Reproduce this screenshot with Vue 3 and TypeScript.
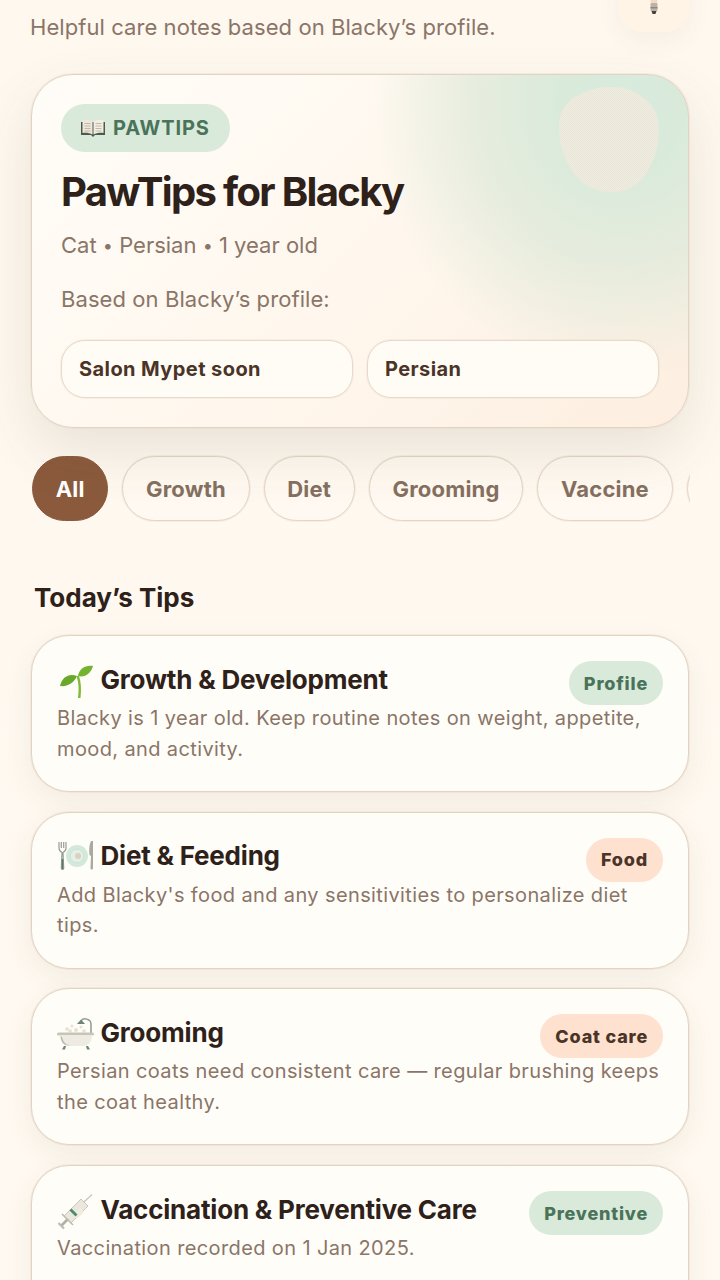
<script setup lang="ts">
interface Tip { icon: string; title: string; text: string; tag: string; tone: string }
const chips: string[] = ['All', 'Growth', 'Diet', 'Grooming', 'Vaccine', 'Health']
const tips: Tip[] = [
  { icon: 'sprout', title: 'Growth & Development', text: 'Blacky is 1 year old. Keep routine notes on weight, appetite, mood, and activity.', tag: 'Profile', tone: 'green' },
  { icon: 'plate', title: 'Diet & Feeding', text: "Add Blacky's food and any sensitivities to personalize diet tips.", tag: 'Food', tone: 'peach' },
  { icon: 'bath', title: 'Grooming', text: 'Persian coats need consistent care — regular brushing keeps the coat healthy.', tag: 'Coat care', tone: 'peach' },
  { icon: 'syringe', title: 'Vaccination & Preventive Care', text: 'Vaccination recorded on 1 Jan 2025.', tag: 'Preventive', tone: 'green' },
]
</script>

<template>
  <div class="page">
    <header class="head">
      <p class="sub">Helpful care notes based on Blacky’s profile.</p>
      <div class="bulb">
        <svg width="14" height="34" viewBox="0 0 14 34">
          <path d="M1 2 C1 10 3 14 4 20 H10 C11 14 13 10 13 2 Z" fill="#f6d9c4" />
          <rect x="3.5" y="20" width="7" height="8" rx="1" fill="#b9b3aa" />
          <rect x="3.5" y="24" width="7" height="1.4" fill="#8d877f" />
          <path d="M4.5 28 H9.5 L8.5 31 H5.5 Z" fill="#4a423a" />
        </svg>
      </div>
    </header>

    <section class="hero">
      <div class="blob"></div>
      <div class="badge">
        <svg class="book" width="24" height="18" viewBox="0 0 24 18">
          <path d="M0 3 V16 H10 L12 18 L14 16 H24 V3 Z" fill="#4d5a50" />
          <path d="M1.5 1.5 C5 .5 9 1 11.5 3 V15.5 C9 14 5 13.5 1.5 14 Z" fill="#efe8da" />
          <path d="M22.5 1.5 C19 .5 15 1 12.5 3 V15.5 C15 14 19 13.5 22.5 14 Z" fill="#f4eee2" />
          <path d="M3.5 4.5 H9.5 M3.5 7 H9.5 M3.5 9.5 H9.5 M3.5 12 H9.5 M14.5 4.5 H20.5 M14.5 7 H20.5 M14.5 9.5 H20.5 M14.5 12 H20.5" stroke="#b8b3a4" stroke-width=".9" />
        </svg>
        <span>PAWTIPS</span>
      </div>
      <h1>PawTips for Blacky</h1>
      <p class="meta">Cat <span class="dot">•</span> Persian <span class="dot">•</span> 1 year old</p>
      <p class="based">Based on Blacky’s profile:</p>
      <div class="facts">
        <div class="fact">Salon Mypet soon</div>
        <div class="fact">Persian</div>
      </div>
    </section>

    <nav class="chips">
      <button v-for="(c, i) in chips" :key="c" class="chip" :class="{ on: i === 0 }">{{ c }}</button>
    </nav>

    <h2>Today’s Tips</h2>

    <article v-for="t in tips" :key="t.title" class="tip">
      <div class="tip-top">
        <h3>
          <svg class="ico" width="36" height="36" viewBox="0 0 36 36">
            <g v-if="t.icon === 'sprout'">
              <path d="M2 23 C4 14 11 10 19 13 C16 20 9 24 2 23 Z" fill="#6aa82b" />
              <path d="M20 13 C21 6 27 2 35 3 C33 10 27 15 20 13 Z" fill="#74b32f" />
              <path d="M18.5 13 C21 20 21 27 20 35 L22.5 35 C23.5 26 23 19 21 13 Z" fill="#7dba35" />
            </g>
            <g v-else-if="t.icon === 'plate'">
              <circle cx="19" cy="17" r="11" fill="#d3e9dc" />
              <circle cx="19" cy="17" r="6.8" fill="#e4f0e6" stroke="#c6dfd0" stroke-width=".8" />
              <circle cx="20" cy="17" r="3" fill="#d9c8b8" opacity=".8" />
              <path d="M1 3 V9 C1 12 3 13 4 13.5 L3.3 29 C3.3 31 5.7 31 5.7 29 L5 13.5 C6 13 8 12 8 9 V3 M3.3 3 V9 M5.7 3 V9" fill="none" stroke="#9a9c94" stroke-width="1.2" />
              <path d="M3.8 20 H5.2 V30 H3.8 Z" fill="#4f7a66" />
              <path d="M33 2 C31 6 31 12 31.5 16 L33 17 L32.5 29 C32.5 31 35 31 35 29 V2 Z" fill="#aaa99f" />
            </g>
            <g v-else-if="t.icon === 'bath'">
              <path d="M33 18 V8 C33 3 25 1 23 5" fill="none" stroke="#8f9a90" stroke-width="1.5" />
              <path d="M19 8 L23 3.5 L27 8 Z" fill="#6d8577" />
              <g fill="#e6e1d6">
                <circle cx="9" cy="13" r="1.8" /><circle cx="14" cy="10" r="1.6" /><circle cx="18" cy="14" r="2" /><circle cx="23" cy="11" r="1.5" /><circle cx="26" cy="15" r="1.8" /><circle cx="12" cy="15" r="1.8" />
              </g>
              <rect x="-1" y="16.5" width="37" height="3" rx="1.5" fill="#c7c5b8" />
              <path d="M2 19 H34 C34 26 30 30 25 30 H11 C6 30 2 26 2 19 Z" fill="#eeece2" />
              <path d="M4 21 C5 26 8 29 13 29.5 H11 C6 30 3 26 2.5 20 Z" fill="#bcbdb0" />
              <path d="M6 30 L8 30 L7 33.5 H4 Z M28 30 L30 30 L32 33.5 H29 Z" fill="#6d8577" />
            </g>
            <g v-else>
              <path d="M26 9 L34 1.5" stroke="#c4c4bb" stroke-width="1.1" />
              <path d="M6 23 L23 6 L30 13 L13 30 Z" fill="#ebe7dc" stroke="#bdbcb0" stroke-width=".8" />
              <path d="M15 22 L22 15 L26 19 L19 26 Z" fill="#f1ecdf" />
              <path d="M13.5 15.5 L19.5 21.5 L17.5 23.5 L11.5 17.5 Z" fill="#4d8a72" />
              <path d="M10 26 L3.5 32.5" stroke="#b0b0a4" stroke-width="2.6" />
              <path d="M0.5 30 L6 35.5" stroke="#bdbcb0" stroke-width="2.2" />
              <path d="M4 21 L15 32" stroke="#bdbcb0" stroke-width="1.6" />
            </g>
          </svg>
          {{ t.title }}
        </h3>
        <span class="tag" :class="t.tone">{{ t.tag }}</span>
      </div>
      <p>{{ t.text }}</p>
    </article>
  </div>
</template>

<style>
html, body { margin: 0; background: #fff8ef; }
</style>

<style scoped>
.page {
  width: 720px;
  height: 1280px;
  overflow: hidden;
  box-sizing: border-box;
  padding: 0 31px;
  background: linear-gradient(180deg, #fff8ef 0%, #fff9f1 100%);
  font-family: Inter, "Noto Sans", sans-serif;
  color: #2e211a;
}
.head {
  display: flex;
  justify-content: space-between;
  align-items: flex-start;
  height: 74px;
  margin-right: -1px;
}
.sub {
  margin: 13px 0 0 -1px;
  font-size: 22px;
  line-height: 28px;
  letter-spacing: 0.07px;
  color: #8a7568;
}
.bulb {
  width: 72px;
  height: 72px;
  margin: -40px 0 0;
  border-radius: 24px;
  background: #fff4e6;
  box-shadow: 0 10px 24px rgba(80, 70, 40, 0.05);
  display: flex;
  justify-content: center;
  padding-top: 23px;
  box-sizing: border-box;
}
.hero {
  position: relative;
  height: 354px;
  box-sizing: border-box;
  padding: 29px 29px 0;
  border: 1px solid #e2d3c3;
  border-radius: 42px;
  background:
    radial-gradient(ellipse 250px 275px at 90% 8%, #d8ebdc 0%, #d9eadb 25%, rgba(224, 234, 218, 0.75) 62%, rgba(255, 246, 236, 0) 100%),
    linear-gradient(135deg, #fffdf8 0%, #fff6ec 60%, #fdeee0 100%);
  box-shadow: 0 0 0 1px rgba(230, 216, 201, 0.35), 0 24px 56px rgba(80, 70, 40, 0.12);
}
.blob {
  position: absolute;
  left: 527px;
  top: 12px;
  width: 100px;
  height: 105px;
  border-radius: 50% 46% 44% 50% / 36% 40% 60% 62%;
  background: repeating-conic-gradient(#f3eadf 0 25%, #e6e8da 0 50%) 0 0 / 2px 2px;
}
.badge {
  position: relative;
  display: inline-flex;
  align-items: center;
  gap: 8px;
  height: 48px;
  padding: 0 20px;
  border-radius: 24px;
  background: #d9eadb;
  color: #4a7359;
  font-size: 20px;
  font-weight: 700;
  letter-spacing: 0.9px;
}
.book { flex: none; }
h1 {
  position: relative;
  margin: 14px 0 0;
  font-size: 40px;
  line-height: 52px;
  font-weight: 700;
  letter-spacing: -1.65px;
  color: #2e211a;
}
.meta {
  margin: 13px 0 0;
  font-size: 22px;
  line-height: 28px;
  color: #8a7568;
}
.dot { font-size: 18px; vertical-align: 1px; }
.based {
  margin: 25px 0 0;
  font-size: 22px;
  line-height: 28px;
  letter-spacing: 0.08px;
  color: #8a7568;
}
.facts {
  display: grid;
  grid-template-columns: 1fr 1fr;
  gap: 14px;
  margin-top: 27px;
}
.fact {
  position: relative;
  height: 58px;
  box-sizing: border-box;
  padding: 0 17px;
  display: flex;
  align-items: center;
  border: 1px solid #e8dacb;
  border-radius: 24px;
  background: #fffcf6;
  box-shadow: 0 0 0 1px rgba(232, 218, 203, 0.3);
  font-size: 20px;
  font-weight: 700;
  letter-spacing: 0.42px;
  color: #4a3428;
}
.chips {
  display: flex;
  gap: 14px;
  padding: 2px;
  margin: 26px 0 0 -1px;
  width: 656px;
  overflow: hidden;
  flex-wrap: nowrap;
}
.chip {
  flex: none;
  height: 65px;
  padding: 0 22.7px;
  border: 1px solid #e4d6c7;
  border-radius: 33px;
  background: #fff9f1;
  box-shadow: 0 0 0 1px rgba(232, 218, 203, 0.35);
  color: #85705f;
  font-family: inherit;
  font-size: 22px;
  font-weight: 700;
  letter-spacing: 0.2px;
}
.chip.on {
  background: #8b5a3c;
  border-color: #8b5a3c;
  box-shadow: none;
  color: #fff;
}
h2 {
  margin: 57px 0 19px 3px;
  font-size: 26px;
  line-height: 36px;
  font-weight: 700;
  color: #2e211a;
}
.tip {
  box-sizing: border-box;
  width: 658px;
  height: 157px;
  margin-bottom: 19.7px;
  padding: 25px 25px 0;
  border: 1px solid #e2d3c3;
  border-radius: 38px;
  background: #fffdf8;
  box-shadow: 0 0 0 1px rgba(230, 216, 201, 0.35), 0 10px 30px rgba(80, 70, 40, 0.07);
}
.tip-top {
  display: flex;
  justify-content: space-between;
  align-items: flex-start;
  height: 44px;
}
h3 {
  margin: 0;
  display: flex;
  align-items: center;
  height: 36px;
  font-size: 26px;
  font-weight: 700;
  letter-spacing: -0.2px;
  color: #2e211a;
}
.ico { flex: none; margin: 3px 6.5px 0 1px; overflow: visible; }
.tag {
  height: 44px;
  padding: 0 15px;
  display: flex;
  align-items: center;
  border-radius: 22px;
  font-size: 18px;
  font-weight: 800;
  letter-spacing: 0.8px;
}
.tag.green { background: #d9eadb; color: #4a7359; }
.tag.peach { background: #ffe1d0; color: #4a3428; }
.tip p {
  margin: -2px -6px 0 0;
  font-size: 20px;
  line-height: 30.5px;
  letter-spacing: 0.38px;
  color: #8a7568;
}
</style>
